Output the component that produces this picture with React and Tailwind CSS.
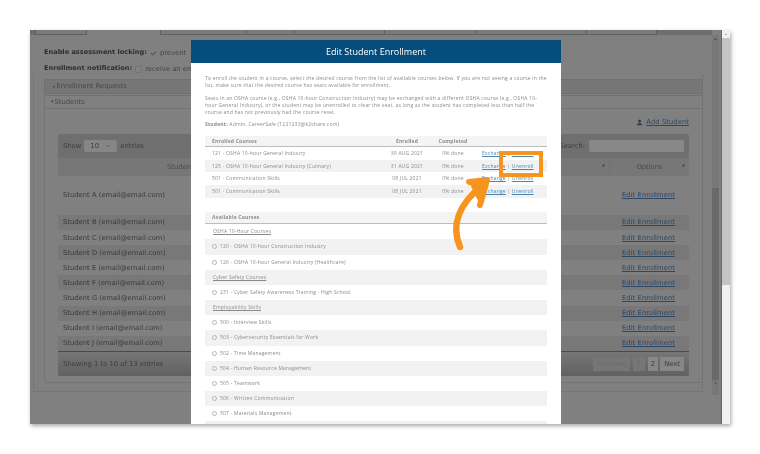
import React from 'react';
import { ChevronDown, Check, User } from 'lucide-react';

const students = ['B', 'C', 'D', 'E', 'F', 'G', 'H', 'I', 'J'];
const b = 'Student ';

const enrolled = [
  { name: '121 - OSHA 10-hour General Industry', date: '30 AUG 2021' },
  { name: '125 - OSHA 10-hour General Industry (Culinary)', date: '31 AUG 2021' },
  { name: '501 - Communication Skills', date: '08 JUL 2021' },
  { name: '501 - Communication Skills', date: '08 JUL 2021' },
];

const available = [
  { heading: 'OSHA 10-Hour Courses' },
  { name: '120 - OSHA 10-hour Construction Industry' },
  { name: '126 - OSHA 10-hour General Industry (Healthcare)' },
  { heading: 'Cyber Safety Courses' },
  { name: '231 - Cyber Safety Awareness Training - High School' },
  { heading: 'Employability Skills' },
  { name: '500 - Interview Skills' },
  { name: '503 - Cybersecurity Essentials for Work' },
  { name: '502 - Time Management' },
  { name: '504 - Human Resource Management' },
  { name: '505 - Teamwork' },
  { name: '506 - Written Communication' },
  { name: '507 - Materials Management' },
  { name: '' },
];

function EditLink() {
  return <span className="underline text-[#2b4866] tracking-[0.05px]">Edit Enrollment</span>;
}

function BackgroundPage() {
  return (
    <div className="w-[682px] h-full flex flex-col font-['DejaVu_Sans',sans-serif] text-[6.8px] text-[#2e2e2e]">
      {/* Tabs */}
      <div className="h-[5px] flex pl-[5px] bg-[#6e6e6e] shrink-0">
        <div className="w-[52px] bg-[#7b7b7b] border-r border-l border-b border-[#5f5f5f]"></div>
        <div className="w-[74px] bg-[#808080] border-r border-[#5f5f5f]"></div>
        <div className="w-[86px] bg-[#7b7b7b] border-r border-b border-[#5f5f5f]"></div>
        <div className="w-[48px] bg-[#7b7b7b] border-r border-b border-[#5f5f5f]"></div>
        <div className="w-[90px] bg-[#7b7b7b] border-r border-b border-[#5f5f5f]"></div>
        <div className="w-[92px] bg-[#7b7b7b] border-r border-b border-[#5f5f5f]"></div>
        <div className="w-[110px] bg-[#7b7b7b] border-r border-b border-[#5f5f5f]"></div>
        <div className="w-[70px] bg-[#7b7b7b] border-r border-b border-[#5f5f5f]"></div>
      </div>

      <div className="pl-[14px] pt-[10px] h-[16px] box-content flex items-center gap-[3px]">
        <span className="font-bold text-[6.6px]">Enable assessment locking:</span>
        <Check size={7} strokeWidth={3} />
        <span className="text-[#444444]">prevent</span>
      </div>
      <div className="pl-[14px] h-[16px] flex items-center gap-[3px]">
        <span className="font-bold text-[6.6px]">Enrollment notification:</span>
        <span className="w-[7px] h-[7px] bg-[#828282] border border-[#747474] rounded-[1px]"></span>
        <span className="text-[#444444]">receive an email</span>
      </div>

      <div className="ml-[3px] w-[670px] h-[318px] mt-[-3px] pt-[5px] border-b border-r border-l border-[#757575]">
        <div className="ml-[10px] w-[659px]">
          <div className="h-[15px] bg-[#767676] border border-[#707070] rounded-t-[2px] flex items-center pl-[8px] gap-[1px] text-[#484848]">
            <span className="text-[5px]">▸</span>Enrollment Requests
          </div>
          <div className="mt-[1px] h-[288px] border border-[#737373] rounded-b-[2px]">
            <div className="h-[13px] border-b border-[#737373] flex items-center pl-[6px] gap-[1px] text-[#484848]">
              <span className="text-[5px]">▾</span>Students
            </div>
            <div className="h-[25px] flex items-center justify-end pr-[13px] pt-[2px]">
              <User size={7} fill="#243f5c" className="text-[#243f5c] mr-[3px]" />
              <span className="underline text-[#2b4866] tracking-[0.05px]">Add Student</span>
            </div>

            <div className="mx-[13px]">
              <div className="h-[24px] bg-[#6f6f6f] rounded-t-[2px] flex items-center px-[5px] text-[#3c3c3c]">
                <span>Show</span>
                <span className="ml-[3px] w-[33px] h-[12px] bg-[#868686] rounded-[2px] flex items-center justify-between px-[6px]">
                  10 <ChevronDown size={6} />
                </span>
                <span className="ml-[3px]">entries</span>
                <span className="ml-auto mr-[4px]">Search:</span>
                <span className="w-[95px] h-[12px] bg-[#888888] rounded-[2px]"></span>
              </div>
              <div className="h-[18px] bg-[#777777] flex items-center text-[#4a4a4a]">
                <div className="w-[551px] pl-[109px] relative">
                  Student
                  <span className="absolute right-[4px] top-0 text-[4px]">▲</span>
                </div>
                <div className="flex-1 text-center border-l border-[#6f6f6f] relative">
                  Options
                  <span className="absolute right-[4px] top-0 text-[4px]">▲</span>
                </div>
              </div>

              <div className="h-[39px] flex items-center justify-between pl-[5px] pr-[14px] text-[#3a3a3a]">
                <span>{b}A (email@email.com)</span>
                <EditLink />
              </div>
              {students.map((s, i) => (
                <div
                  key={s}
                  className={`h-[15.1px] flex items-center justify-between pl-[5px] pr-[14px] text-[#3a3a3a] ${i % 2 === 0 ? 'bg-[#787878]' : ''}`}
                >
                  <span>{b}{s} (email@email.com)</span>
                  <EditLink />
                </div>
              ))}

              <div className="h-[25px] border-t border-[#4a4a4a] bg-gradient-to-b from-[#767676] to-[#616161] rounded-b-[2px] flex items-center px-[5px] text-[#3c3c3c]">
                <span>Showing 1 to 10 of 13 entries</span>
                <div className="ml-auto flex items-center gap-[1px]">
                  <span className="h-[14px] flex items-center px-[4px] bg-[#767676] text-[#6a6a6a]">Previous</span>
                  <span className="h-[14px] flex items-center px-[4px] ml-[2px] bg-[#767676] text-[#6a6a6a]">1</span>
                  <span className="h-[14px] flex items-center px-[3px] ml-[2px] bg-[#878787]">2</span>
                  <span className="h-[14px] flex items-center px-[4px] ml-[1px] bg-[#878787]">Next</span>
                </div>
              </div>
            </div>
          </div>
        </div>
      </div>
    </div>
  );
}

function Modal() {
  return (
    <div className="absolute left-[161px] top-[10px] bottom-0 w-[370px] bg-white overflow-hidden font-['Open_Sans',sans-serif] text-[5px] leading-[7px] text-[#8a8a8a]">
      <div className="h-[23px] bg-[#054d7d] flex items-center justify-center text-white text-[9px]">
        Edit Student Enrollment
      </div>
      <div className="px-[14px] pt-[12px] tracking-[0.2px]">
        <p>To enroll the student in a course, select the desired course from the list of available courses below. If you are not seeing a course in the list, make sure that the desired course has seats available for enrollment.</p>
        <p className="mt-[6px]">Seats in an OSHA course (e.g., OSHA 10-hour Construction Industry) may be exchanged with a different OSHA course (e.g., OSHA 10-hour General Industry), or the student may be unenrolled to clear the seat, as long as the student has completed less than half the course and has not previously had the course reset.</p>
        <p className="mt-[5px]"><span className="font-bold">Student:</span> Admin, CareerSafe (1221233@k2share.com)</p>

        <div className="mt-[8px] bg-[#f4f4f4] rounded-[2px]">
          <div className="h-[11px] flex items-center border-b border-[#bdbdbd] font-bold">
            <div className="w-[178px] pl-[7px]">Enrolled Courses</div>
            <div className="w-[48px] text-center">Enrolled</div>
            <div className="w-[44px] text-center">Completed</div>
          </div>
          {enrolled.map((row, i) => (
            <div key={i} className={`h-[12.7px] flex items-center ${i % 2 === 0 ? 'bg-white' : 'bg-[#f2f2f2]'}`}>
              <div className="w-[178px] pl-[7px]">{row.name}</div>
              <div className="w-[48px] text-center">{row.date}</div>
              <div className="w-[44px] text-center">0% done</div>
              <div className="ml-[7px]">
                <span className="underline text-[#4a86b5]">Exchange</span> | <span className="underline text-[#4a86b5]">Unenroll</span>
              </div>
            </div>
          ))}
        </div>

        <div className="mt-[14px] bg-[#f4f4f4] rounded-t-[2px]">
          <div className="h-[12.5px] flex items-center border-b border-[#bdbdbd] pl-[7px] font-bold">Available Courses</div>
          {available.map((row, i) => (
            <div key={i} className={`h-[15.17px] flex items-center pl-[7px] ${i % 2 === 1 ? 'bg-[#f2f2f2]' : 'bg-white'}`}>
              {row.heading ? (
                <span className="underline ml-[1px]">{row.heading}</span>
              ) : row.name ? (
                <>
                  <span className="w-[5px] h-[5px] rounded-full border border-[#b5b5b5] mr-[3px]"></span>
                  {row.name}
                </>
              ) : null}
            </div>
          ))}
        </div>
      </div>
    </div>
  );
}

export default function App() {
  return (
    <div className="w-[760px] h-[454px] bg-white pt-[30px] pl-[30px] overflow-hidden">
      <div className="relative w-[700px] h-[394px] flex shadow-[1px_2px_4px_rgba(0,0,0,0.35)] blur-[0.45px]">
        <div className="w-[692px] h-full flex bg-[#808080] overflow-hidden border-r border-[#666666]">
          <BackgroundPage />
          {/* inner scrollbar */}
          <div className="w-[7px] h-[360px] mt-[5px] bg-[#787878] flex flex-col items-center text-[4px] leading-[8px] text-[#4a4a4a]">
            <div className="h-[153px] w-full text-center">▲</div>
            <div className="h-[192px] w-full bg-[#696969]"></div>
            <div className="flex-1 w-full text-center">▼</div>
          </div>
        </div>
        {/* page scrollbar */}
        <div className="w-[8px] h-full bg-[#f1f1f1] flex flex-col">
          <div className="h-[255px] bg-[#c4c4c4] flex flex-col text-center text-[3px] leading-[8px] text-[#8a8a8a]">
            <div className="bg-[#f1f1f1]">▲</div>
          </div>
        </div>

        <Modal />

        {/* orange callout */}
        <div className="absolute left-[469px] top-[121px] w-[44px] h-[26px] border-[4px] border-[#f7941d]"></div>
        <svg className="absolute left-0 top-0 pointer-events-none" width="700" height="394" viewBox="30 30 700 394" fill="none">
          <path d="M460 247C451 226 458 204 484 184" stroke="#f7941d" strokeWidth="6.5" strokeLinecap="round" />
          <path d="M469 182L487 180L480 205" stroke="#f7941d" strokeWidth="6" strokeLinecap="round" strokeLinejoin="round" fill="#f7941d" />
        </svg>
      </div>
    </div>
  );
}
